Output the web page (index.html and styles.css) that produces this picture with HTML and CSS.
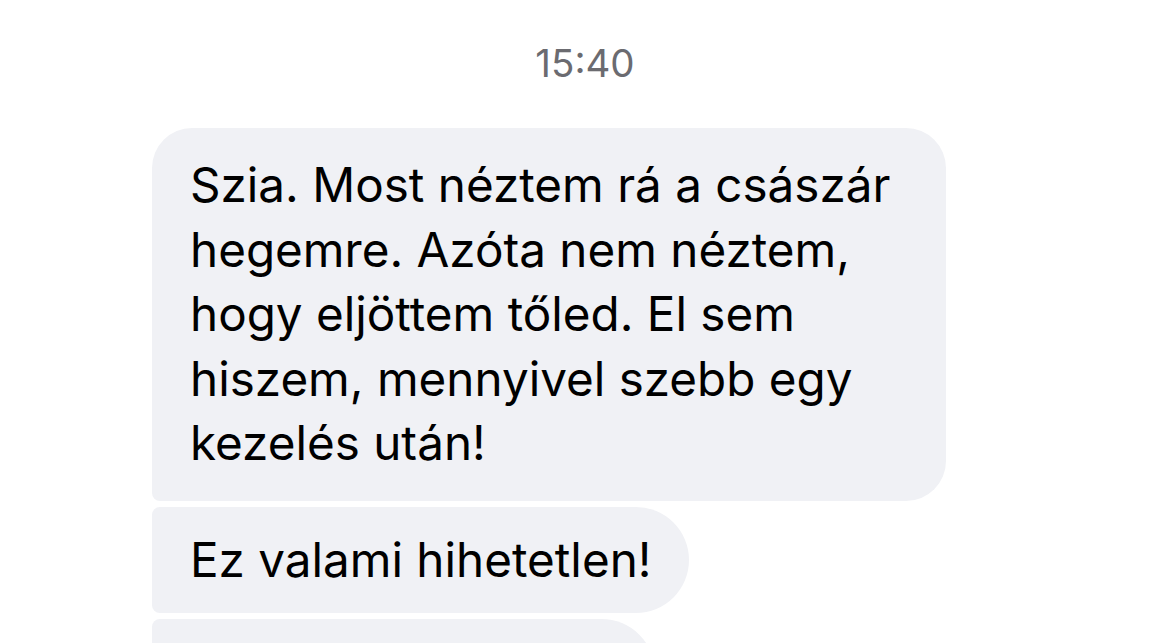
FILE: index.html
```html
<!doctype html>
<html lang="hu">
<head>
  <meta charset="utf-8">
  <title>Üzenetek</title>
  <link rel="stylesheet" href="styles.css">
</head>
<body>
  <div class="thread">
    <div class="timestamp">15:40</div>

    <div class="group">
      <div class="bubble first">
        Szia. Most néztem rá a császár hegemre. Azóta nem néztem, hogy eljöttem tőled. El sem hiszem, mennyivel szebb egy kezelés után!
      </div>
      <div class="bubble middle">
        Ez valami hihetetlen!
      </div>
      <div class="bubble middle">
        Köszönöm szépen!
      </div>
    </div>
  </div>
</body>
</html>
```

FILE: styles.css
```css
body {
  margin: 0;
  background: #fff;
  font-family: Inter, "Noto Sans", sans-serif;
  color: #000;
}
.thread {
  padding: 40px 0 0 152px;
  overflow: hidden;
  height: 643px;
  box-sizing: border-box;
}
.timestamp {
  margin-left: -152px;
  text-align: center;
  font-size: 38.5px;
  color: #6b6b70;
  line-height: 46px;
  margin-bottom: 42px;
}
.group {
  display: flex;
  flex-direction: column;
  align-items: flex-start;
  gap: 6px;
}
.bubble {
  background: #f0f1f5;
  font-size: 47.6px;
  line-height: 64.5px;
  padding: 21px 38px;
  border-radius: 54px 54px 54px 8px;
}
.bubble.first {
  width: 718px;
  padding: 25px 38px;
  border-radius: 40px 40px 40px 8px;
}
.bubble.middle {
  border-radius: 8px 54px 54px 8px;
}
```
